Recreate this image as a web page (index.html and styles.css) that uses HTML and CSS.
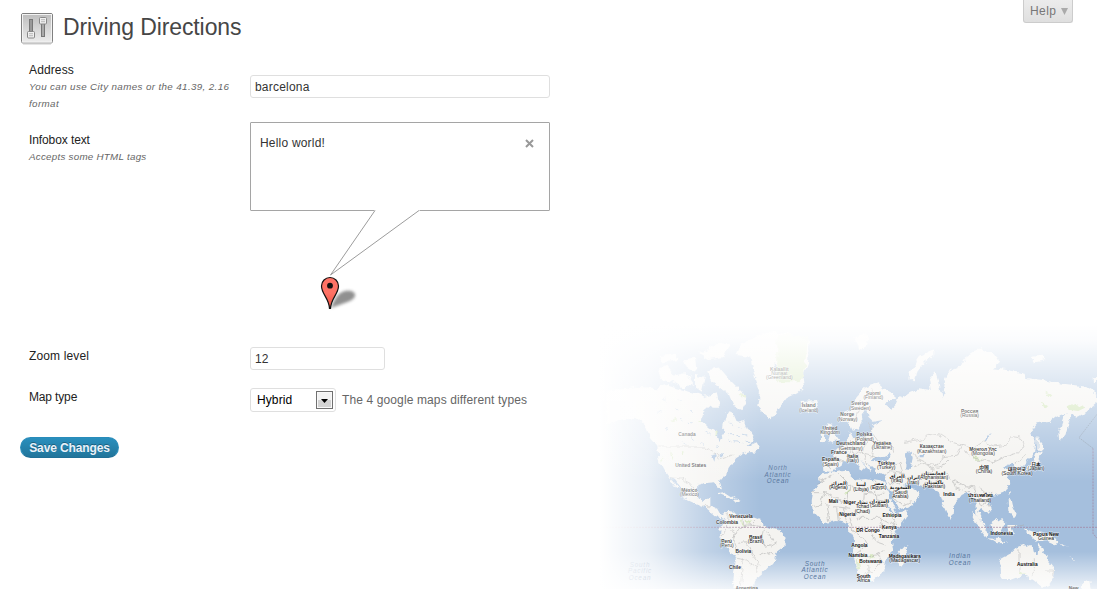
FILE: index.html
```
<!DOCTYPE html>
<html lang="en">
<head>
<meta charset="utf-8">
<title>Driving Directions</title>
<link rel="stylesheet" href="styles.css">
</head>
<body>
<svg class="world" viewBox="0 0 1491 792" aria-hidden="true">
  <defs>
    <linearGradient id="left"><stop offset="0" stop-color="#fff"/><stop offset=".3" stop-color="#fff" stop-opacity=".78"/><stop offset=".65" stop-color="#fff" stop-opacity=".32"/><stop offset="1" stop-color="#fff" stop-opacity="0"/></linearGradient>
    <linearGradient id="top" x2="0" y2="1"><stop offset="0" stop-color="#fff"/><stop offset=".1" stop-color="#fff" stop-opacity=".95"/><stop offset=".5" stop-color="#fff" stop-opacity=".48"/><stop offset="1" stop-color="#fff" stop-opacity="0"/></linearGradient>
    <linearGradient id="bottom" x2="0" y2="1"><stop offset="0" stop-color="#fff" stop-opacity="0"/><stop offset="1" stop-color="#fff" stop-opacity=".8"/></linearGradient>
    <filter id="coast" x="0" y="0" width="1491" height="792" filterUnits="userSpaceOnUse"><feTurbulence type="fractalNoise" baseFrequency=".045" numOctaves="3" seed="4"/><feDisplacementMap in="SourceGraphic" scale="20" xChannelSelector="R" yChannelSelector="G"/></filter>
  </defs>
  <rect class="sea" width="1491" height="792"/>
  <g filter="url(#coast)">
    <g class="land">
      <path d="M20 200L110 185L170 190L200 180L250 195L300 212L340 235L310 262L303 290L325 310L350 325L355 348L368 330L370 300L380 262L405 268L415 290L432 285L445 315L465 345L440 362L480 372L465 380L450 378L425 387L405 400L385 430L382 450L355 466L363 490L352 488L345 472L310 475L292 480L290 510L305 528L328 515L328 540L350 548L362 570L385 560L430 568L480 585L495 605L535 615L557 635L550 665L530 680L522 710L495 740L465 765L462 792L397 792L405 720L408 700L385 670L360 635L362 605L375 580L345 572L320 550L300 542L262 525L250 498L225 465L212 458L237 490L228 488L198 445L175 402L172 365L150 340L135 300L105 275L60 285L20 300Z"/>
      <path d="M175 135L200 120L225 150L260 145L280 175L250 190L215 170L185 165ZM180 90L225 85L235 105L190 112ZM250 100L285 95L290 140L262 130ZM295 85L350 55L390 50L370 100L330 105ZM325 135L360 130L390 165L425 200L438 230L425 255L400 240L385 205L350 180L330 165ZM285 150L315 155L305 200L285 185ZM310 215L350 205L360 245L335 245ZM350 505L375 500L405 520L385 520ZM400 520L425 524L410 530ZM452 360L470 352L482 374L462 378Z"/>
      <path d="M410 90L450 95L465 155L480 200L475 245L495 268L515 283L530 258L560 220L592 205L612 185L608 155L625 110L625 50L590 30L500 20L420 60Z"/>
    </g>
    <g class="land" transform="translate(420 0)">
      <path d="M298 275L310 262L335 250L345 215L375 185L410 172L430 190L462 207L465 225L440 225L435 240L450 252L470 235L475 210L490 215L510 200L540 190L575 195L570 160L585 140L595 170L605 220L612 170L630 135L655 130L680 95L720 70L765 85L780 110L760 130L800 135L850 145L860 160L910 165L960 175L1000 180L1040 185L1072 205L1071 235L1040 260L1015 275L995 270L985 300L975 330L958 350L955 320L970 280L980 265L950 275L930 290L890 295L870 320L890 350L885 385L858 410L845 425L850 450L835 437L815 415L792 425L805 445L808 480L790 505L760 512L742 520L755 550L742 568L720 548L715 560L730 590L740 600L732 602L710 570L705 525L685 500L665 510L640 545L637 575L625 575L605 530L595 500L575 490L540 480L515 470L495 480L525 495L540 515L515 540L475 555L455 515L438 480L430 450L405 435L385 415L390 442L375 425L358 402L375 428L365 436L345 405L325 410L305 408L300 425L275 438L250 435L248 405L285 403L280 380L300 365L320 350L330 320L340 340L365 335L395 325L400 300L430 285L400 290L385 275L382 245L365 265L368 290L355 315L340 320L325 290L305 290Z"/>
      <path d="M250 444L320 434L330 452L350 465L375 462L432 470L440 495L455 530L470 565L503 556L500 575L470 615L455 640L460 680L435 705L430 740L400 765L365 770L355 735L340 695L345 650L328 620L325 595L290 588L250 595L218 560L215 530L220 500L240 465Z"/>
      <path d="M498 660L504 685L485 725L473 715L478 682ZM262 295L275 300L278 322L295 345L262 355L270 330L256 312ZM243 330L258 328L258 347L243 349ZM182 228L228 225L234 245L207 262L185 252ZM340 40L375 25L385 60L360 75Z"/>
    </g>
    <g class="land" transform="translate(900 0)">
      <path d="M298 705L330 688L350 668L375 658L392 663L395 680L412 692L418 655L430 680L445 705L465 730L462 760L445 785L425 785L400 765L370 750L330 765L305 765L302 730Z"/>
      <path d="M213 555L228 565L265 625L258 637L235 605ZM258 640L300 642L325 650L295 652ZM272 600L305 580L317 592L300 625L278 620ZM325 600L350 600L335 610L345 630L328 625ZM370 610L400 620L440 625L478 650L460 655L430 643L410 650L390 630ZM323 525L335 527L340 550L350 570L342 580L325 560ZM413 330L428 370L420 377L412 372ZM412 378L425 380L418 405L400 425L380 435L364 450L362 440L392 420ZM100 75L60 92L38 125L28 160L45 175L52 140L75 110L100 92ZM395 95L425 92L440 105L405 112ZM550 770L568 765L572 792L548 792ZM324 495L330 500L325 510ZM148 570L157 573L152 582ZM575 160L591 158L591 166L576 170ZM480 650L500 665L490 662ZM515 695L525 708L518 706Z"/>
    </g>
    <g class="sea">
      <path d="M815 408L830 390L850 396L870 388L876 400L850 409ZM918 385L935 380L938 402L932 432L920 430L925 405ZM1155 345L1170 330L1178 318L1172 338L1158 350ZM862 535L880 560L890 570L870 562ZM866 490L890 530L885 540L868 515ZM330 385L345 382L340 410ZM352 386L372 390L365 400ZM1000 555L1020 570ZM520 115L530 120L528 150ZM956 390h12v7h-12Z"/>
    </g>
    <g class="green">
      <path d="M532 30H625L612 150L592 172H532Z"/>
      <path d="M210 285l16-7 2 14zM290 290l14-5v8zM340 322l14 2-5 7zM418 206l15 5-3 9zM185 390l8 13-5 7zM210 375l10 22-6 4zM245 380l10 5-8 10zM200 425l12 10zM215 450l20 5zM330 445l20-5zM425 580l8 18-4 5zM440 584l12 5-8 12zM460 595l12 4zM395 605l10 12zM400 650l8 10zM470 700l10 2zM730 505l20-10-4 12zM770 690l8 40-5 6zM810 680l12 12-13 6zM860 640l12 10zM775 735l10 15zM1118 394l32 7-30 5zM1335 200l20 6-6 7zM1325 232l20 12-12 6zM1400 245l25-12 30 15-20 10-25-3zM1288 215l12 8zM1258 738l25 12-25-3zM1270 665l8 2zM1350 738l8 10zM1240 740l10 10z"/>
    </g>
    <g class="borders">
      <path d="M175 366H315L350 385L355 405L400 390M208 458L245 462L270 475L290 500M310 545L330 545M385 565L382 610L362 635M382 610L405 625L400 650L415 690M400 640L412 610L440 600L490 605M430 570L435 605M460 585L462 605M415 655L440 650L460 690L475 710L470 740M410 700L440 705L475 730M430 700L420 792M490 610L485 650L500 670L530 650M500 620L520 650M475 690L500 680L520 690"/>
      <path d="M635 500L675 500L720 530L745 520M650 475L700 450M675 500L660 540L640 545M715 445L750 480L790 500M750 480L745 510L750 540M790 470L790 505L850 508M790 505L785 560L755 575M830 470V525L870 530M680 535L690 590M700 545L750 550M710 550L715 590M730 550L740 590M750 575L760 625M770 580L840 580L850 620M760 620L790 640L800 660L765 690M800 610L830 650L860 660M765 695L830 690L850 680M800 700L805 740L780 770M835 690L850 710L820 740L800 735M845 580L885 600L870 630M870 570L890 600"/>
      <path d="M670 405L690 430M700 395L720 405L735 408M735 350L745 370L730 390M755 345V375L790 385M790 330L815 350L860 365M800 350L790 385L830 395M750 375L740 395L780 390M790 385L800 420M820 365L812 400M785 225L775 255L765 290M815 190L825 225M800 290L815 320L830 345L870 350L880 385M845 415L900 415L910 450M865 470L900 480L920 500M850 450L870 440L905 445L925 470M880 510L905 540L935 530"/>
      <path d="M912 355L965 345L985 325L1020 330L1050 350L1085 360L1070 390L1030 395L1015 420L980 415L950 400L940 385M1085 360L1120 370L1150 350L1190 365L1220 360L1235 335L1265 340L1275 365L1250 385L1215 395L1180 410L1125 400L1095 380M940 425L970 415L1005 430L1035 420L1050 405M950 480L980 440L1010 435M1000 490L1015 460L1040 445L1060 465L1100 485L1125 490L1130 515M1060 470L1065 485L1110 500M1140 485L1155 512L1180 505M1130 505L1145 540L1160 530M1160 515L1170 545M1240 415L1265 400L1280 388M1300 700V755M1257 670V740M1335 735H1360V760M1275 600L1215 608"/>
    </g>
    <g class="lakes"><path d="M190 220l10 8M230 225l12 4M220 250l15 8M265 250l10 10M195 310l12 4M250 350l8 12M275 330l5 20M320 320l12 10M390 290l8 12M415 305l10 4M385 325l15 4M430 330l12 3M400 350l18 3M440 345l8 6M300 350l12 8M350 365l10 4M240 280l10 5M170 260l12 4M265 295l14 2M385 347l9 4M425 355l8 -4M410 325l6 8"/></g>
  </g>
  <path class="equator" d="M0 607H1491M1479 370V625L1491 640"/>
  <path class="dateline" d="M1491 268L1437 338L1479 370"/>
  <rect y="680" width="1491" height="112" fill="url(#bottom)"/>
  <g class="labels">
    <text x="261" y="332">Canada</text><text x="272" y="427">United States</text><text x="268" y="500">México<tspan x="268" dy="13">(Mexico)</tspan></text>
    <text x="423" y="578">Venezuela</text><text x="381" y="596">Colombia</text><text x="467" y="642">Brasil<tspan x="467" dy="13">(Brazil)</tspan></text><text x="380" y="653">Perú<tspan x="380" dy="13">(Peru)</tspan></text><text x="430" y="685">Bolivia</text><text x="405" y="731">Chile</text><text class="edge" x="440" y="794">Argentina</text>
    <text x="538" y="137">Kalaallit<tspan x="538" dy="13">Nunaat</tspan><tspan x="538" dy="13">(Greenland)</tspan></text>
    <text x="626" y="247">Ísland<tspan x="626" dy="13">(Iceland)</tspan></text><text x="820" y="209">Suomi<tspan x="820" dy="13">(Finland)</tspan></text><text x="780" y="241">Sverige<tspan x="780" dy="13">(Sweden)</tspan></text><text x="742" y="274">Norge<tspan x="742" dy="13">(Norway)</tspan></text>
    <text x="690" y="315">United<tspan x="690" dy="13">Kingdom</tspan></text><text x="793" y="334">Polska<tspan x="793" dy="13">(Poland)</tspan></text><text x="752" y="361">Deutschland<tspan x="752" dy="13">(Germany)</tspan></text><text x="846" y="360">Україна<tspan x="846" dy="13">(Ukraine)</tspan></text><text x="717" y="387">France</text><text x="758" y="399">Italia<tspan x="758" dy="13">(Italy)</tspan></text><text x="692" y="409">España<tspan x="692" dy="13">(Spain)</tspan></text><text x="859" y="419">Türkiye<tspan x="859" dy="13">(Turkey)</tspan></text>
    <text x="715" y="480">الجزائر<tspan x="715" dy="13">(Algeria)</tspan></text><text x="783" y="484">ليبيا<tspan x="783" dy="13">(Libya)</tspan></text><text x="835" y="480">مصر<tspan x="835" dy="13">(Egypt)</tspan></text><text x="891" y="459">العراق<tspan x="891" dy="13">(Iraq)</tspan></text><text x="940" y="463">ایران<tspan x="940" dy="13">(Iran)</tspan></text><text x="901" y="493">السعودية<tspan x="901" dy="13">(Saudi</tspan><tspan x="901" dy="13">Arabia)</tspan></text>
    <text x="700" y="535">Mali</text><text x="749" y="537">Niger</text><text x="787" y="537">تشاد<tspan x="787" dy="13">Tchad</tspan><tspan x="787" dy="13">(Chad)</tspan></text><text x="837" y="533">السودان<tspan x="837" dy="13">(Sudan)</tspan></text><text x="742" y="572">Nigeria</text><text x="876" y="575">Ethiopia</text><text x="868" y="611">Kenya</text><text x="804" y="620">DR Congo</text><text x="867" y="640">Tanzania</text><text x="778" y="667">Angola</text><text x="774" y="697">Namibia</text><text x="812" y="715">Botswana</text><text x="914" y="699">Madagasikara<tspan x="914" dy="13">(Madagascar)</tspan></text><text x="791" y="758">South<tspan x="791" dy="13">Africa</tspan></text>
    <text x="1109" y="263">Россия<tspan x="1109" dy="13">(Russia)</tspan></text><text x="995" y="370">Казақстан<tspan x="995" dy="13">(Kazakhstan)</tspan></text><text x="1149" y="378">Монгол Улс<tspan x="1149" dy="13">(Mongolia)</tspan></text><text x="1152" y="432">中国<tspan x="1152" dy="13">(China)</tspan></text><text x="1000" y="449">افغانستان<tspan x="1000" dy="13">(Afghanistan)</tspan></text><text x="1002" y="476">پاکستان<tspan x="1002" dy="13">(Pakistan)</tspan></text><text x="1047" y="512">India</text><text x="1140" y="517">ประเทศไทย<tspan x="1140" dy="14">(Thailand)</tspan></text><text x="1251" y="438">대한민국<tspan x="1251" dy="13">(South Korea)</tspan></text><text x="1308" y="422">日本<tspan x="1308" dy="13">(Japan)</tspan></text><text x="1205" y="631">Indonesia</text><text x="1338" y="633">Papua New<tspan x="1338" dy="13">Guinea</tspan></text><text x="1282" y="724">Australia</text><text class="edge" x="1421" y="794">New</text>
  </g>
  <g class="oceans">
    <text x="534" y="436">North<tspan x="534" dy="19">Atlantic</tspan><tspan x="534" dy="19">Ocean</tspan></text><text x="645" y="723">South<tspan x="645" dy="19">Atlantic</tspan><tspan x="645" dy="19">Ocean</tspan></text><text x="1080" y="700">Indian<tspan x="1080" dy="20">Ocean</tspan></text><text x="120" y="726">South<tspan x="120" dy="19">Pacific</tspan><tspan x="120" dy="19">Ocean</tspan></text>
  </g>
  <rect width="480" height="792" fill="url(#left)"/>
  <rect width="1491" height="470" fill="url(#top)"/>
</svg>

<div class="page">
  <header class="header">
    <svg class="header-icon" viewBox="0 0 32 32">
      <defs><linearGradient id="plate" x2="0" y2="1"><stop offset="0" stop-color="#bdbdbd"/><stop offset="1" stop-color="#eee"/></linearGradient></defs>
      <rect x=".5" y=".5" width="31" height="29.5" rx="1.5" fill="url(#plate)" stroke="#808080"/>
      <rect x="1.5" y="1.5" width="29" height="27.5" fill="none" stroke="#f3f3f3"/>
      <path d="M2 31H30" stroke="#ccc"/>
      <rect x="8.5" y="6.5" width="3" height="16" fill="#999" stroke="#777"/>
      <rect x="20.5" y="7.5" width="3" height="16" fill="#aaa" stroke="#777"/>
      <rect x="6.5" y="18.500" width="7" height="6.500" rx="1" fill="#f0f0f0" stroke="#888"/>
      <rect x="18.500" y="4.500" width="7" height="6.500" rx="1" fill="#f0f0f0" stroke="#888"/>
      <path d="M8 20.700H12M8 22.700H12M20 6.700H24M20 8.700H24" stroke="#aaa" stroke-width=".8"/>
    </svg>
    <h1 class="title">Driving Directions</h1>
    <div class="help"><span>Help</span><svg class="help-arrow" viewBox="0 0 7 7"><path d="M0 0H7L3.500 7Z"/></svg></div>
  </header>

  <form class="form">
    <div class="row row-address">
      <label class="label">Address<em class="hint">You can use City names or the 41.39, 2.16 format</em></label>
      <div class="input input-wide">barcelona</div>
    </div>
    <div class="row row-infobox">
      <label class="label">Infobox text<em class="hint">Accepts some HTML tags</em></label>
      <div class="infobox">
        <div class="bubble"><span>Hello world!</span><svg class="close" viewBox="0 0 9 9"><path d="M1 1L8 8M8 1L1 8"/></svg></div>
        <svg class="pointer" viewBox="250 209 300 104">
          <defs>
            <filter id="soft" x="-30%" y="-50%" width="160%" height="200%"><feGaussianBlur stdDeviation="1.500"/></filter>
            <linearGradient id="pin" x2="0" y2="1"><stop offset=".5" stop-color="#fe7265"/><stop offset="1" stop-color="#f05040"/></linearGradient>
          </defs>
          <path d="M374.500 209H419.500V212H374.500Z" fill="#fff"/>
          <path d="M375 210.500L330.500 275L419 210.500" fill="#fff" stroke="#9c9c9c"/>
          <path d="M331 308C334 300 337 293 345 291C351 290 356 292 355 296C354 301 344 303 331 308Z" fill="#555" opacity=".65" filter="url(#soft)"/>
          <path d="M329.500 308.500C329 298 321.500 294 321.500 286A8.500 8.500 0 0 1 338.500 286C338.500 294 331 298 330.500 308.500Z" fill="url(#pin)" stroke="#111" stroke-width="1.200"/>
          <circle cx="330" cy="285.700" r="2.900" fill="#111"/>
        </svg>
      </div>
    </div>
    <div class="row row-zoom">
      <label class="label">Zoom level</label>
      <div class="input input-small">12</div>
    </div>
    <div class="row row-type">
      <label class="label">Map type</label>
      <div class="field">
        <div class="select"><span>Hybrid</span><span class="select-button"><svg class="select-arrow" viewBox="0 0 7 4"><path d="M0 0H7L3.500 4Z"/></svg></span></div>
        <span class="description">The 4 google maps different types</span>
      </div>
    </div>
    <button class="save" type="button">Save Changes</button>
  </form>
</div>
</body>
</html>
```

FILE: styles.css
```
* { box-sizing: border-box; }
body {
  margin: 0;
  height: 589px;
  overflow: hidden;
  position: relative;
  background: #fff;
  color: #222;
  font: 12px/17px "Liberation Sans", Arial, sans-serif;
}

/* Decorative map behind the form */
.world { position: absolute; right: 0; bottom: 0; width: 497px; height: 264px; }
.sea { fill: #a5bfdd; }
.land { fill: #f4f3f0; }
.green { fill: #cbe3ae; opacity: .8; }
.borders { fill: none; stroke: #aaa; stroke-width: 2; opacity: .8; }
.lakes { stroke: #a5bfdd; stroke-width: 2.5; }
.equator { fill: none; stroke: #a27f9c; stroke-width: 2; stroke-dasharray: 6 3; }
.dateline { fill: none; stroke: #8290a0; stroke-width: 2; stroke-dasharray: 5 3; }
.labels text {
  font: bold 14.5px "Liberation Sans", "DejaVu Sans", "Noto Sans CJK KR", sans-serif;
  fill: #111;
  stroke: #fff;
  stroke-width: 2.5px;
  stroke-opacity: .6;
  paint-order: stroke;
  text-anchor: middle;
}
.labels tspan { font-weight: normal; font-size: 15px; }
.labels .edge { fill: #777; }
.oceans text {
  font: italic 19px "Liberation Sans", Arial, sans-serif;
  letter-spacing: 2.3px;
  fill: #55749c;
  text-anchor: middle;
}

.page { position: relative; }
.header { display: flex; align-items: flex-start; height: 61px; padding: 0 24px 0 21px; }
.header-icon { width: 32px; height: 32px; margin-top: 13px; }
.title {
  margin: 13px auto 0 10px;
  color: #464646;
  font-size: 23px;
  font-weight: normal;
  line-height: 29px;
  letter-spacing: -.1px;
}
.help {
  display: flex;
  align-items: center;
  gap: 5px;
  width: 50px;
  height: 23px;
  padding: 1px 0 0 6px;
  border: 1px solid #ccc;
  border-top: 0;
  border-radius: 0 0 3px 3px;
  background: linear-gradient(#ececec, #dfdfdf);
  color: #777;
  letter-spacing: .45px;
}
.help-arrow { width: 7px; height: 7px; fill: #aaa; }

.form { display: flex; flex-direction: column; align-items: flex-start; }
.row { display: grid; grid-template-columns: 221px auto; align-items: start; padding-left: 29px; }
.row-address { height: 61px; }
.row-infobox { height: 215px; }
.row-zoom { height: 41px; }
.row-type { height: 59px; }
.label { display: block; padding: 1px 12px 0 0; letter-spacing: .13px; }
.row-infobox .label { padding-top: 10px; letter-spacing: -.1px; }
.row-zoom .label, .row-type .label { padding-top: 11px; }
.row-type .label { letter-spacing: -.15px; }
.hint { display: block; margin-top: -1px; color: #666; font-size: 9.8px; letter-spacing: .37px; }
.row-infobox .hint { letter-spacing: .25px; }

.input {
  height: 23px;
  padding: 3px 4px;
  border: 1px solid #dfdfdf;
  border-radius: 3px;
  background: #fff;
  color: #333;
  letter-spacing: .2px;
}
.input-wide { width: 300px; margin-top: 14px; }
.input-small { width: 135px; margin-top: 10px; }

.infobox { width: 300px; }
.bubble {
  display: flex;
  justify-content: space-between;
  height: 89px;
  padding: 12px 15px 0 9px;
  border: 1px solid #a5a5a5;
  border-radius: 1px;
  color: #333;
  letter-spacing: .2px;
}
.close { width: 9px; height: 9px; margin-top: 4px; stroke: #999; stroke-width: 2; }
.pointer { display: block; width: 300px; height: 104px; margin-top: -2px; }

.field { display: flex; align-items: center; gap: 6px; margin-top: 10px; }
.select {
  display: flex;
  justify-content: space-between;
  align-items: center;
  width: 86px;
  height: 24px;
  padding: 0 2px 0 6px;
  border: 1px solid #dfdfdf;
  border-radius: 3px;
  background: #fff;
  color: #000;
  letter-spacing: .1px;
}
.select-button {
  display: flex;
  align-items: center;
  justify-content: center;
  width: 17px;
  height: 18px;
  border: 1px solid #707070;
  background: linear-gradient(#f2f2f2 50%, #d3d3d3 50%);
  box-shadow: inset 0 0 0 1px #f8f8f8;
}
.select-arrow { width: 7px; height: 4px; margin-top: 2px; }
.description { color: #666; letter-spacing: .12px; }

.save {
  width: 99px;
  height: 21px;
  margin-left: 20px;
  padding: 1px 0 0;
  border: 1px solid #298cba;
  border-bottom-color: #1f6f96;
  border-radius: 11px;
  background: linear-gradient(#2a8fbd, #21759b);
  color: #eaf2fa;
  font: bold 12px/17px "Liberation Sans", Arial, sans-serif;
  letter-spacing: -.12px;
  text-shadow: 0 -1px 0 rgba(0, 0, 0, .3);
}
```
